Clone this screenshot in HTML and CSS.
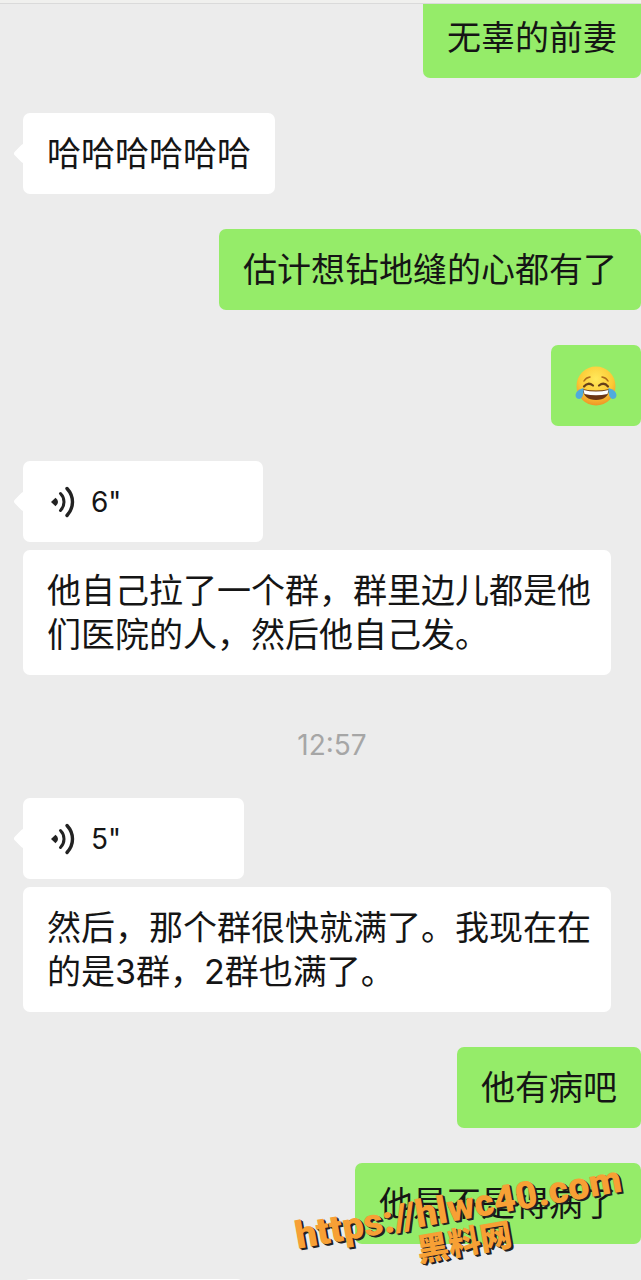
FILE: index.html
```html
<!DOCTYPE html>
<html lang="zh-CN">
<head>
    <meta charset="UTF-8">
    <meta name="viewport" content="width=device-width, initial-scale=1.0">
    <title>聊天</title>
    <link rel="stylesheet" href="styles.css">
</head>
<body>
    <div class="header"></div>
    <main class="chat">
        <div class="message sent">
            <div class="bubble cut">无辜的前妻</div>
        </div>
        <div class="message received">
            <div class="bubble tail">哈哈哈哈哈哈</div>
        </div>
        <div class="message sent">
            <div class="bubble">估计想钻地缝的心都有了</div>
        </div>
        <div class="message sent">
            <div class="bubble">
                <svg class="emoji" viewBox="0 0 42 40" role="img" aria-label="笑哭">
                    <defs>
                        <radialGradient id="face" cx="50%" cy="32%" r="68%">
                            <stop offset="0" stop-color="#ffe95c"/>
                            <stop offset="0.65" stop-color="#fcc934"/>
                            <stop offset="1" stop-color="#ee9526"/>
                        </radialGradient>
                    </defs>
                    <circle cx="21" cy="20" r="19.5" fill="url(#face)"/>
                    <path d="M9 15Q11 11.500 15 11M33 15Q31 11.500 27 11" fill="none" stroke="#ad6b1b" stroke-width="1.500" stroke-linecap="round"/>
                    <path d="M9 20.500Q13 15.500 18 19.500M24 19.500Q29 15.500 33 20.500" fill="none" stroke="#66401a" stroke-width="2.200" stroke-linecap="round"/>
                    <path d="M7.500 23Q21 26 34.500 23Q33 34 21 34Q9 34 7.500 23Z" fill="#6b3515"/>
                    <path d="M8.500 24Q21 27 33.500 24L32.500 28Q21 30.500 9.500 28Z" fill="#fff"/>
                    <path d="M8.500 22Q1 24 .5 29Q.6 33 4.500 33Q9 32 8.500 22Z" fill="#4fabdc"/>
                    <path d="M33.500 22Q41 24 41.500 29Q41.400 33 37.500 33Q33 32 33.500 22Z" fill="#4fabdc"/>
                </svg>
            </div>
        </div>
        <div class="message received">
            <button class="bubble tail voice">
                <svg class="wave" viewBox="0 0 24 32" aria-hidden="true">
                    <path d="M0 16L4.500 11.800Q7 13.500 7 16Q7 18.500 4.500 20.200Z" fill="#222"/>
                    <path d="M9.500 7.500Q13 11 13 16Q13 21 9.500 24.500" fill="none" stroke="#222" stroke-width="3" stroke-linecap="round"/>
                    <path d="M16 2.500Q21.500 8.500 21.500 16Q21.500 23.500 16 29.500" fill="none" stroke="#222" stroke-width="3.400" stroke-linecap="round"/>
                </svg>
                <span>6"</span>
            </button>
            <div class="bubble transcript">他自己拉了一个群，群里边儿都是他们医院的人，然后他自己发。</div>
        </div>
        <time class="time">12:57</time>
        <div class="message received">
            <button class="bubble tail voice short">
                <svg class="wave" viewBox="0 0 24 32" aria-hidden="true">
                    <path d="M0 16L4.500 11.800Q7 13.500 7 16Q7 18.500 4.500 20.200Z" fill="#222"/>
                    <path d="M9.500 7.500Q13 11 13 16Q13 21 9.500 24.500" fill="none" stroke="#222" stroke-width="3" stroke-linecap="round"/>
                    <path d="M16 2.500Q21.500 8.500 21.500 16Q21.500 23.500 16 29.500" fill="none" stroke="#222" stroke-width="3.400" stroke-linecap="round"/>
                </svg>
                <span>5"</span>
            </button>
            <div class="bubble transcript">然后，那个群很快就满了。我现在在的是3群，2群也满了。</div>
        </div>
        <div class="message sent">
            <div class="bubble">他有病吧</div>
        </div>
        <div class="message sent">
            <div class="bubble">他是不是得病了</div>
        </div>
        <div class="message received">
            <button class="bubble voice short" aria-label="语音"></button>
        </div>
    </main>
    <div class="watermark">
        <span>https://hlwc40.com</span>
        <span>黑料网</span>
    </div>
</body>
</html>
```

FILE: styles.css
```css
* {
    box-sizing: border-box;
}
body {
    position: relative;
    display: flex;
    flex-direction: column;
    height: 100vh;
    margin: 0;
    overflow: hidden;
    background: #ececec;
    color: #151515;
    font-family: Inter, "Noto Sans CJK SC", sans-serif;
}
.header {
    flex: none;
    height: 4px;
    background: #f0f0ee;
    border-bottom: 1px solid #dadada;
}
.chat {
    display: flex;
    flex: 1;
    flex-direction: column;
    gap: 35px;
    min-height: 0;
    padding-left: 23px;
    overflow: hidden;
}
.message {
    display: flex;
    flex: none;
    flex-direction: column;
    align-items: flex-start;
    gap: 8px;
}
.sent {
    align-items: flex-end;
}
.bubble {
    position: relative;
    padding: 19px 24px 18px;
    border: 0;
    border-radius: 7px;
    background: #fff;
    color: inherit;
    font-family: inherit;
    font-size: 34px;
    line-height: 44px;
}
.sent .bubble {
    background: #95ec69;
}
.sent .cut {
    padding-top: 12px;
    border-radius: 0 0 7px 7px;
}
.tail::before {
    content: "";
    position: absolute;
    top: 33px;
    left: -7px;
    width: 15px;
    height: 15px;
    border-radius: 3px;
    background: #fff;
    transform: rotate(45deg);
}
.voice {
    display: flex;
    align-items: center;
    gap: 16px;
    width: 240px;
    height: 81px;
    padding-left: 28px;
    font-size: 28px;
    cursor: pointer;
}
.short {
    width: 221px;
}
.wave {
    width: 24px;
    height: 32px;
}
.transcript {
    max-width: 588px;
    padding-right: 20px;
}
.emoji {
    display: block;
    width: 42px;
    height: 44px;
}
.time {
    align-self: center;
    margin-top: 17px;
    color: #a6a6a6;
    font-size: 28px;
    line-height: 36px;
}
.watermark {
    position: absolute;
    right: 14px;
    bottom: 19px;
    display: flex;
    flex-direction: column;
    align-items: center;
    color: #f7a035;
    font-family: Roboto, "Noto Sans CJK SC", sans-serif;
    font-size: 38px;
    font-weight: 900;
    line-height: 36px;
    text-shadow: 1px 1px 0 #222, 2px 2px 0 #222;
    transform: rotate(-10deg);
    pointer-events: none;
}
.watermark span + span {
    font-size: 32px;
}
```
